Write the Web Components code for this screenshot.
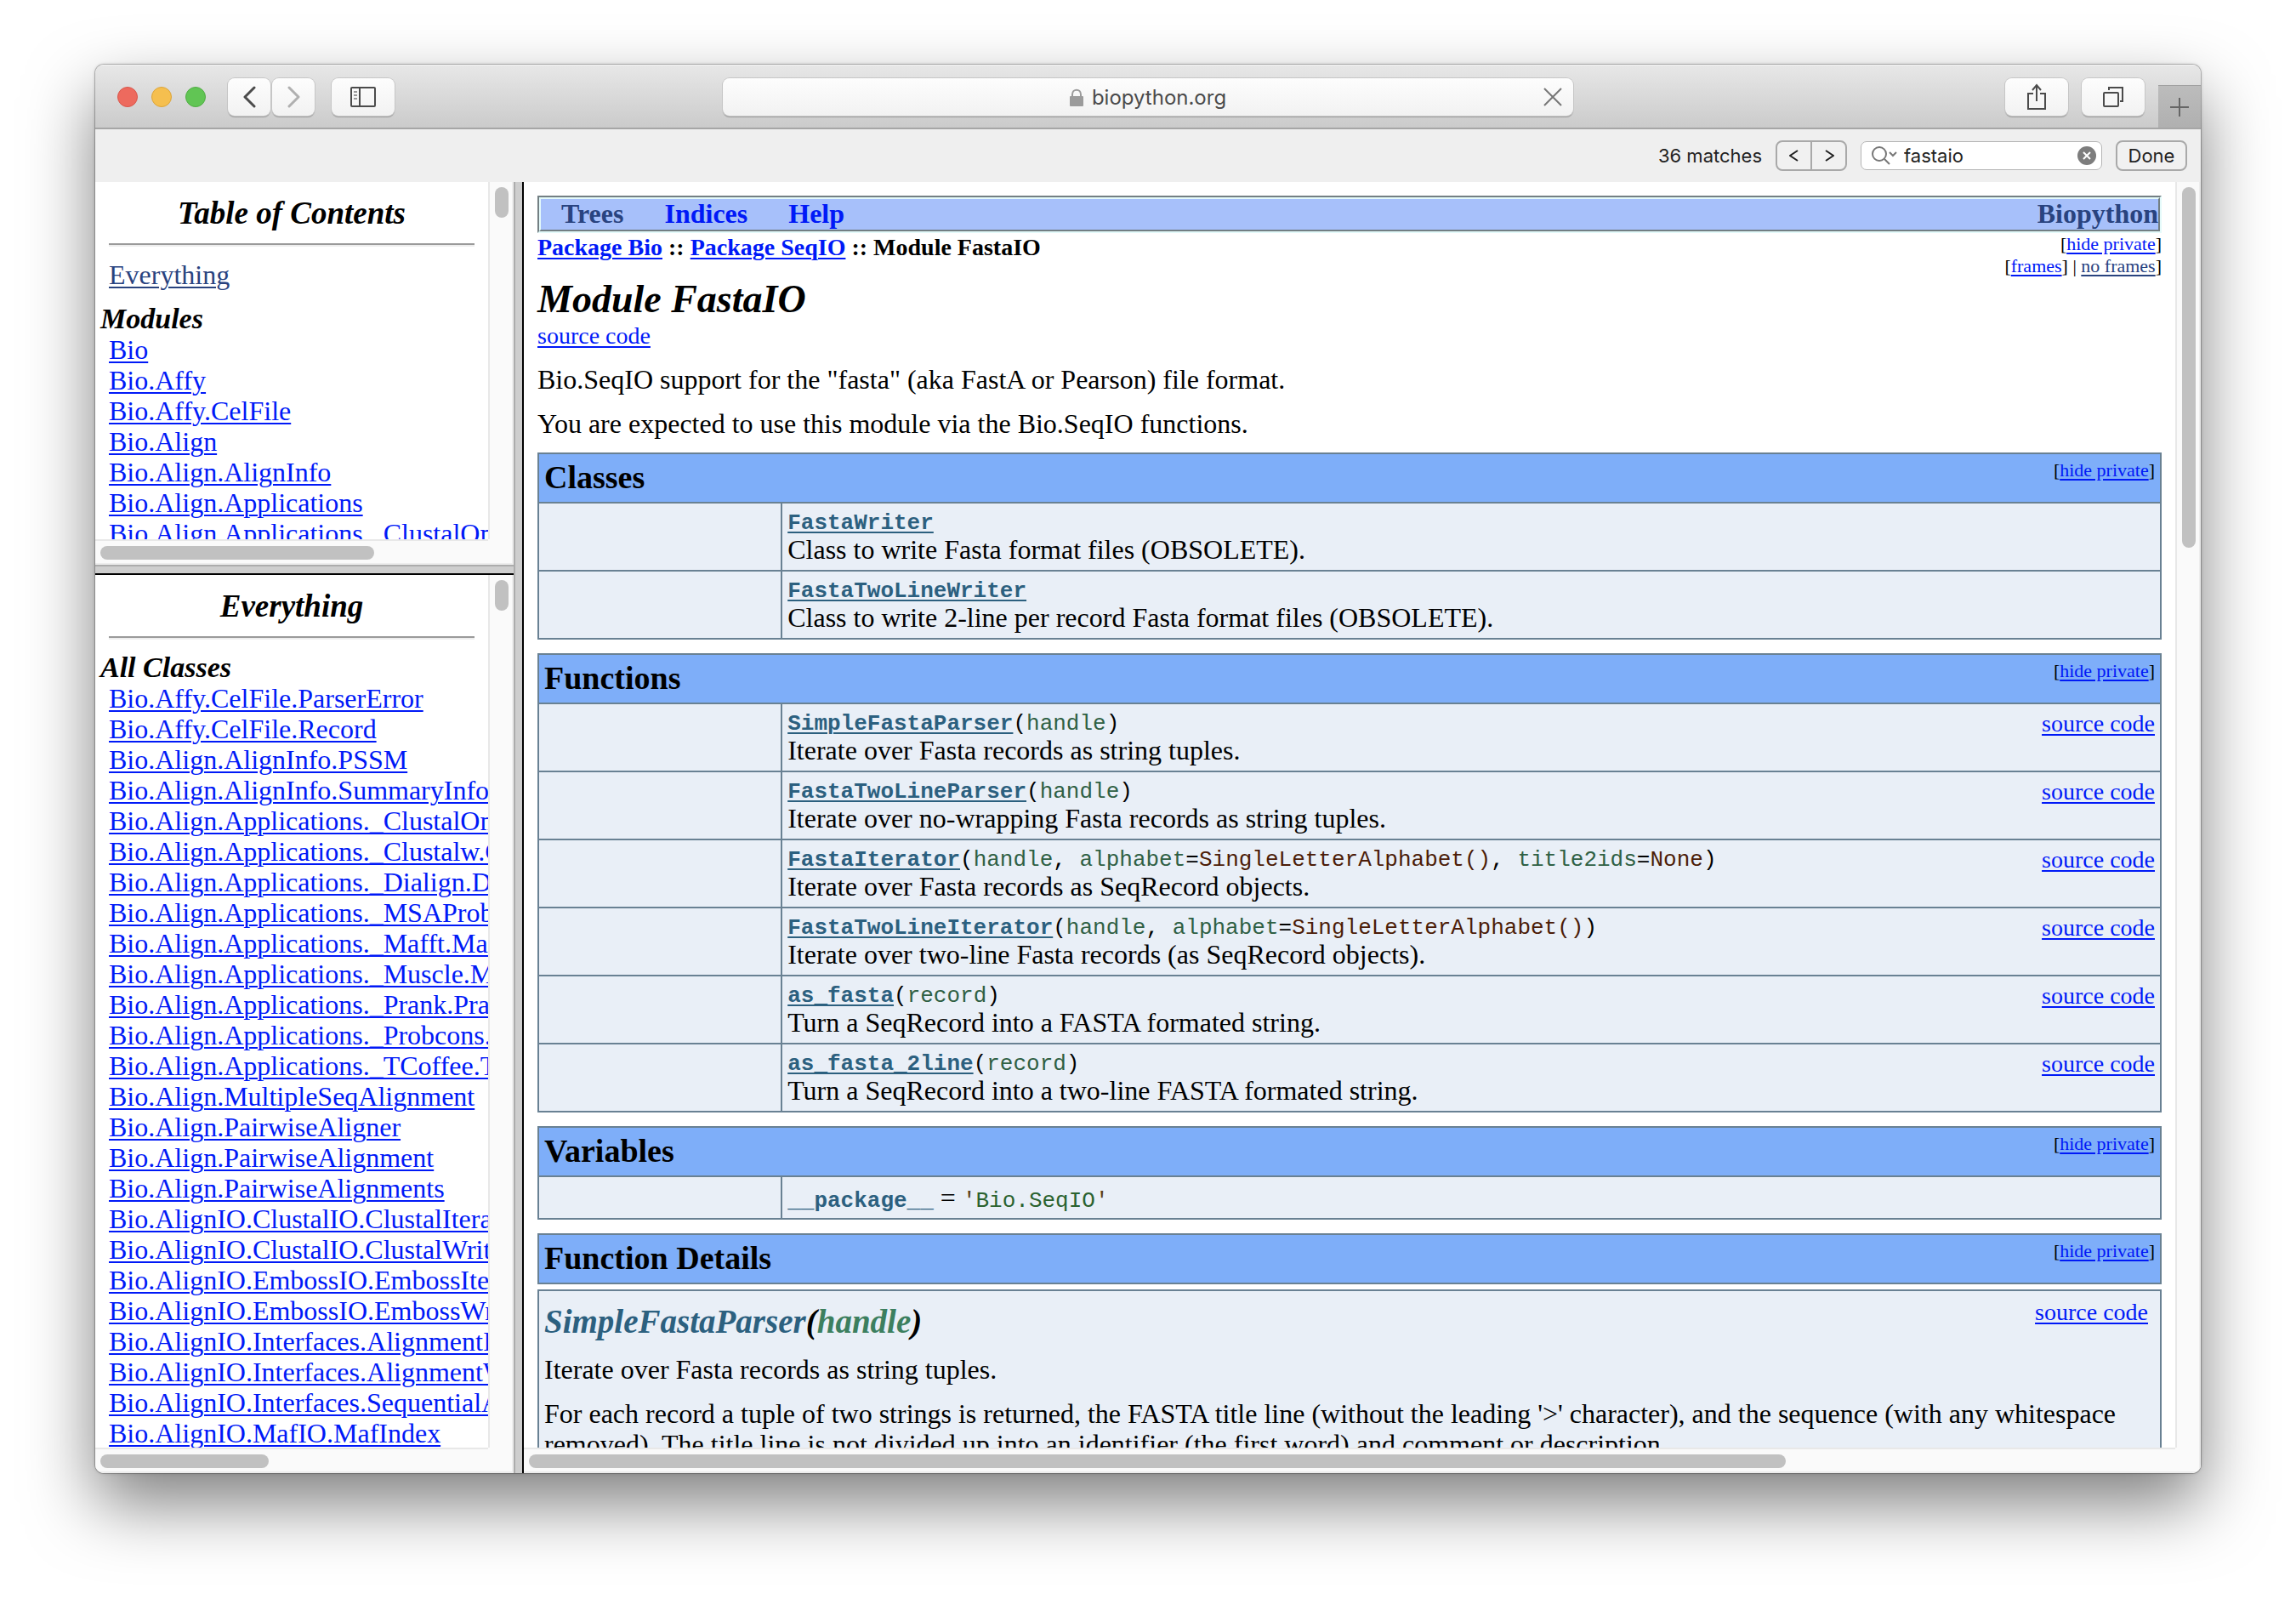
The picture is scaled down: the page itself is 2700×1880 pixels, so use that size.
<!DOCTYPE html>
<html lang="en">
<head>
<meta charset="utf-8">
<title>Bio.SeqIO.FastaIO</title>
<style>
  html, body { margin: 0; height: 100%; background: #fff; }
  body {
    box-sizing: border-box;
    padding: 76px 112px 148px;
    font-family: "Liberation Serif", "Times New Roman", serif;
    font-size: 32px;
    line-height: 36px;
    color: #000;
    --link: #0019f7;
    --seen: #29437f;
  }
</style>
</head>
<body>
<browser-window>
  <tool-bar slot="bar" address="biopython.org"></tool-bar>
  <find-bar slot="bar" query="fastaio" matches="36 matches"></find-bar>
  <frame-set slot="page">
    <doc-frame slot="top" class="side" style="--vthumb:36px;--hthumb:322px">
      <side-list heading="Table of Contents" group="Modules" top-link="Everything" list="modules"></side-list>
    </doc-frame>
    <doc-frame slot="bottom" class="side" style="--vthumb:36px;--hthumb:198px">
      <side-list heading="Everything" group="All Classes" list="classes"></side-list>
    </doc-frame>
    <doc-frame slot="main" style="--vthumb:424px;--hthumb:1478px">
      <module-page></module-page>
    </doc-frame>
  </frame-set>
</browser-window>

<script>
const LINKS = `a { color: var(--link); text-decoration-thickness: 2px; text-underline-offset: 3px; } a.seen { color: var(--seen); }`;

function define(name, render) {
  customElements.define(name, class extends HTMLElement {
    connectedCallback() {
      if (this.shadowRoot) return;
      this.attachShadow({ mode: 'open' }).innerHTML = render(this);
    }
  });
}

const LISTS = {
  modules: ['Bio', 'Bio.Affy', 'Bio.Affy.CelFile', 'Bio.Align', 'Bio.Align.AlignInfo',
    'Bio.Align.Applications', 'Bio.Align.Applications._ClustalOmega'],
  classes: ['Bio.Affy.CelFile.ParserError', 'Bio.Affy.CelFile.Record', 'Bio.Align.AlignInfo.PSSM',
    'Bio.Align.AlignInfo.SummaryInfo', 'Bio.Align.Applications._ClustalOmega.ClustalOmegaCommandline',
    'Bio.Align.Applications._Clustalw.ClustalwCommandline', 'Bio.Align.Applications._Dialign.DialignCommandline',
    'Bio.Align.Applications._MSAProbs.MSAProbsCommandline', 'Bio.Align.Applications._Mafft.MafftCommandline',
    'Bio.Align.Applications._Muscle.MuscleCommandline', 'Bio.Align.Applications._Prank.PrankCommandline',
    'Bio.Align.Applications._Probcons.ProbconsCommandline', 'Bio.Align.Applications._TCoffee.TCoffeeCommandline',
    'Bio.Align.MultipleSeqAlignment', 'Bio.Align.PairwiseAligner', 'Bio.Align.PairwiseAlignment',
    'Bio.Align.PairwiseAlignments', 'Bio.AlignIO.ClustalIO.ClustalIterator', 'Bio.AlignIO.ClustalIO.ClustalWriter',
    'Bio.AlignIO.EmbossIO.EmbossIterator', 'Bio.AlignIO.EmbossIO.EmbossWriter',
    'Bio.AlignIO.Interfaces.AlignmentIterator', 'Bio.AlignIO.Interfaces.AlignmentWriter',
    'Bio.AlignIO.Interfaces.SequentialAlignmentWriter', 'Bio.AlignIO.MafIO.MafIndex']
};

define('browser-window', () => `
  <style>
    :host { display: flex; flex-direction: column; height: 100%; border-radius: 10px; overflow: hidden; background: #fff;
      box-shadow: 0 0 0 1px rgba(0,0,0,.22), 0 0 4px rgba(0,0,0,.2), 0 36px 80px rgba(0,0,0,.5); }
    main { flex: 1; min-height: 0; display: flex; }
  </style>
  <slot name="bar"></slot><main><slot name="page"></slot></main>`);

define('tool-bar', host => `
  <style>
    :host { display: flex; align-items: center; box-sizing: border-box; height: 76px;
      background: linear-gradient(#e7e7e7, #cbcbcb); border-top: 1px solid #f4f4f4; border-bottom: 2px solid #a6a6a6;
      font: 24px/32px Inter, sans-serif; color: #4b4b4b; }
    .left, .right { flex: 1 1 0; display: flex; align-items: center; box-sizing: border-box; }
    .lights { display: flex; gap: 16px; margin: 0 26px; }
    .right { justify-content: flex-end; gap: 16px; align-self: stretch; }
    .light { width: 24px; height: 24px; padding: 0; border-radius: 50%; border: 1px solid; }
    .tool { box-sizing: border-box; width: 74px; height: 44px; padding: 0; border: 0; border-radius: 8px; color: #4b4b4b;
      background: linear-gradient(#fdfdfd, #f2f2f2); box-shadow: 0 0 0 1px #c6c6c6, 0 2px 1px #9d9d9d;
      display: flex; align-items: center; justify-content: center; }
    .nav { width: 50px; margin-right: 2px; }
    .side { margin-left: 18px; }
    .off { color: #b0b0b0; }
    .address { flex: 0 1 1000px; height: 44px; border-radius: 8px; box-sizing: border-box;
      background: linear-gradient(#fdfdfd, #f2f2f2); box-shadow: 0 0 0 1px #c6c6c6, 0 2px 1px #9d9d9d;
      display: grid; grid-template-columns: 1fr auto 1fr; align-items: center; }
    .address label { grid-column: 2; display: flex; align-items: center; gap: 10px; padding-top: 2px; }
    input { field-sizing: content; font: inherit; color: inherit; border: 0; padding: 0; background: none; outline: 0; }
    .stop { justify-self: end; border: 0; background: none; padding: 0 12px 0 0; color: #767676; display: flex; }
    .add { align-self: flex-end; width: 50px; height: 50px; padding: 0; border: 0; border-top: 1px solid #a0a0a0; background: linear-gradient(#bcbcbc, #b0b0b0); color: #666; display: flex; align-items: center; justify-content: center; }
    svg { display: block; fill: none; stroke: currentColor; stroke-width: 2; }
    .chevron { stroke-width: 3; stroke-linecap: round; stroke-linejoin: round; }
  </style>
  <div class="left">
    <div class="lights">
      <button class="light" aria-label="Close" style="background:#ed6a5e;border-color:#d9564b"></button>
      <button class="light" aria-label="Minimise" style="background:#f5bf4f;border-color:#dca53a"></button>
      <button class="light" aria-label="Zoom" style="background:#61c554;border-color:#50ad43"></button>
    </div>
    <button class="tool nav" aria-label="Back"><svg class="chevron" width="16" height="26"><path d="M14 2 3 13l11 11"/></svg></button>
    <button class="tool nav off" aria-label="Forward"><svg class="chevron" width="16" height="26"><path d="M3 2l11 11L3 24"/></svg></button>
    <button class="tool side" aria-label="Show sidebar"><svg width="30" height="24"><rect x="1" y="1" width="28" height="22" rx="1"/><path d="M11 1v22"/><path d="M4 6h4M4 10h4M4 14h4" stroke="#999"/></svg></button>
  </div>
  <div class="address">
    <label><svg width="16" height="22"><rect x="0" y="9" width="16" height="12" rx="1" fill="#9b9b9b" stroke="none"/><path d="M3 10V7c0-7 10-7 10 0v3" stroke="#9b9b9b"/></svg><input aria-label="Address" value="${host.getAttribute('address')}"></label>
    <button class="stop" aria-label="Stop loading"><svg width="24" height="24"><path d="M2 2l20 20M22 2 2 22"/></svg></button>
  </div>
  <div class="right">
    <button class="tool" aria-label="Share"><svg width="24" height="32"><path d="M8 12H2v18h20V12h-6M12 21V3M7 8l5-6 5 6"/></svg></button>
    <button class="tool" aria-label="Show tabs"><svg width="26" height="26"><rect x="2" y="8" width="17" height="16" rx="1"/><path d="M8 5V2h16v16h-3"/></svg></button>
    <button class="add" aria-label="New tab"><svg width="22" height="22"><path d="M11 0v22M0 11h22"/></svg></button>
  </div>`);

define('find-bar', host => `
  <style>
    :host { display: flex; align-items: center; justify-content: flex-end; box-sizing: border-box; height: 62px;
      padding: 0 16px 0 0; gap: 16px; background: #efefef; font: 22px/28px Inter, sans-serif; color: #222; }
    button { font: inherit; color: inherit; background: #f1f1f1; border: 2px solid #a9a9a9; box-sizing: border-box; padding: 0; height: 36px;
      display: flex; align-items: center; justify-content: center; }
    .step { display: flex; }
    .step button { width: 43px; border-radius: 8px 0 0 8px; }
    .step button + button { border-radius: 0 8px 8px 0; margin-left: -2px; }
    .field { box-sizing: border-box; width: 284px; height: 34px; display: flex; align-items: center; border: 1px solid #b5b5b5;
      border-radius: 7px; background: #fff; padding: 0 6px 0 12px; }
    input { flex: 1; min-width: 0; font: inherit; color: inherit; border: 0; padding: 0 0 0 7px; background: none; outline: 0; }
    .field button { border: 0; background: none; height: 22px; }
    .done { width: 84px; border-radius: 8px; }
    svg { display: block; fill: none; stroke: currentColor; stroke-width: 2; }
  </style>
  <span>${host.getAttribute('matches')}</span>
  <div class="step">
    <button aria-label="Previous match"><svg width="12" height="16"><path d="M10 2 1 8l9 6"/></svg></button>
    <button aria-label="Next match"><svg width="12" height="16"><path d="M2 2l9 6-9 6"/></svg></button>
  </div>
  <label class="field"><svg width="31" height="22" style="color:#777"><circle cx="9" cy="9" r="8"/><path d="M15 15l6 6M21 7l4 4 4-4"/></svg>
    <input aria-label="Find in page" value="${host.getAttribute('query')}">
    <button aria-label="Clear"><svg width="22" height="22"><circle cx="11" cy="11" r="11" fill="#7d7d7d" stroke="none"/><path d="M7 7l8 8M15 7l-8 8" stroke="#fff"/></svg></button>
  </label>
  <button class="done">Done</button>`);

define('frame-set', () => `
  <style>
    :host { flex: 1; min-width: 0; display: flex; }
    .column { flex: 0 0 492px; min-width: 0; display: flex; flex-direction: column; }
    ::slotted([slot=top]) { flex: 0 0 450px; min-height: 0; }
    ::slotted([slot=bottom]), ::slotted([slot=main]) { flex: 1; min-height: 0; min-width: 0; }
    .split { flex: 0 0 8px; background: #cecece; border: 0 solid #acacac; }
    .row { border-top-width: 2px; border-bottom: 2px solid #000; }
    .col { border-left-width: 2px; border-right: 2px solid #000; }
  </style>
  <div class="column"><slot name="top"></slot><div class="split row"></div><slot name="bottom"></slot></div>
  <div class="split col"></div><slot name="main"></slot>`);

define('doc-frame', () => `
  <style>
    :host { display: grid; grid-template: minmax(0, 1fr) 30px / minmax(0, 1fr) 30px; background: #fafafa; }
    .view { overflow: hidden; min-height: 0; background: #fff; padding: 16px 16px 0; }
    .v, .h { box-sizing: border-box; display: flex; }
    .v { border-left: 2px solid #e8e8e8; border-right: 2px solid #ededed; padding: 6px 4px 0 6px; grid-row: 1; grid-column: 2; }
    .h { border-top: 2px solid #e8e8e8; border-bottom: 2px solid #ededed; padding: 6px 0 4px 6px; grid-row: 2; grid-column: 1; }
    .corner { border: 0 solid #ededed; border-width: 0 2px 2px 0; }
    i { display: block; border-radius: 8px; background: #c1c1c1; }
    .v i { width: 16px; height: var(--vthumb); }
    .h i { width: var(--hthumb); height: 16px; }
  </style>
  <div class="view"><slot></slot></div><div class="v"><i></i></div><div class="h"><i></i></div><div class="corner"></div>`);

define('side-list', host => `
  <style>
    ${LINKS}
    :host { display: block; white-space: nowrap; }
    h1 { margin: 0; font: italic bold 37px/42px "Liberation Serif", serif; text-align: center; }
    hr { margin: 14px 0 0; border: 0; height: 2px; background: #9a9a9a; border-bottom: 2px solid #eee; }
    p { margin: 15px 0 0; }
    h2 { margin: 16px 0 0 -10px; font: italic bold 34px/36px "Liberation Serif", serif; }
    hr + h2 { margin-top: 15px; }
    ul { list-style: none; margin: 0; padding: 0; }
  </style>
  <h1>${host.getAttribute('heading')}</h1><hr>
  ${host.hasAttribute('top-link') ? `<p><a class="seen" href="#">${host.getAttribute('top-link')}</a></p>` : ''}
  <h2>${host.getAttribute('group')}</h2>
  <ul>${LISTS[host.getAttribute('list')].map(t => `<li><a href="#">${t}</a></li>`).join('')}</ul>`);

const TABLES = {
  classes: {
    heading: 'Classes',
    rows: [
      { name: 'FastaWriter', text: 'Class to write Fasta format files (OBSOLETE).' },
      { name: 'FastaTwoLineWriter', text: 'Class to write 2-line per record Fasta format files (OBSOLETE).' }
    ]
  },
  functions: {
    heading: 'Functions',
    rows: [
      { name: 'SimpleFastaParser', args: [['handle']], text: 'Iterate over Fasta records as string tuples.' },
      { name: 'FastaTwoLineParser', args: [['handle']], text: 'Iterate over no-wrapping Fasta records as string tuples.' },
      { name: 'FastaIterator', args: [['handle'], ['alphabet', 'SingleLetterAlphabet()'], ['title2ids', 'None']], text: 'Iterate over Fasta records as SeqRecord objects.' },
      { name: 'FastaTwoLineIterator', args: [['handle'], ['alphabet', 'SingleLetterAlphabet()']], text: 'Iterate over two-line Fasta records (as SeqRecord objects).' },
      { name: 'as_fasta', args: [['record']], text: 'Turn a SeqRecord into a FASTA formated string.' },
      { name: 'as_fasta_2line', args: [['record']], text: 'Turn a SeqRecord into a two-line FASTA formated string.' }
    ]
  },
  variables: { heading: 'Variables', rows: [{ name: '__package__', value: 'Bio.SeqIO' }] },
  details: { heading: 'Function Details', rows: [] }
};

const arg = ([n, d]) => `<span class="arg">${n}</span>${d ? `=<span class="def">${d}</span>` : ''}`;
const row = r => `<tr><td class="type"></td><td>${r.value
  ? `<code class="name">${r.name}</code> = <code><span class="quote">'</span><span class="str">${r.value}</span><span class="quote">'</span></code>`
  : `<div class="cell"><div><div class="sig"><a class="name" href="#">${r.name}</a>${r.args ? `(${r.args.map(arg).join(', ')})` : ''}</div><div class="text">${r.text}</div></div>${r.args ? '<a class="src" href="#">source code</a>' : ''}</div>`
}</td></tr>`;

define('api-table', host => {
  const t = TABLES[host.getAttribute('data')];
  return `
  <style>
    ${LINKS}
    :host { display: block; margin-top: 16px; }
    table { width: 100%; border-collapse: collapse; table-layout: fixed; background: #e9eff7; }
    col.type { width: 15%; }
    th, td { border: 2px solid #698193; padding: 6px; text-align: left; font-weight: normal; }
    th { background: #7eaef9; }
    .head, .cell { display: flex; justify-content: space-between; align-items: flex-start; }
    .head { min-height: 44px; }
    .cell { min-height: 66px; }
    .head b { font-size: 38px; line-height: 42px; }
    .head span { font-size: 22px; line-height: 26px; }
    .sig, code { font-family: "Liberation Mono", monospace; font-size: 26px; }
    .sig { line-height: 30px; padding-top: 2px; }
    code { line-height: 26px; }
    .text { line-height: 32px; }
    .name { font-weight: bold; color: #2c607f; }
    .arg { color: #2f6044; } .def { color: #4c1c07; } .quote { color: #5d4116; } .str { color: #2a622f; }
    .src { font-size: 28px; line-height: 34px; }
  </style>
  <table><colgroup><col class="type"><col></colgroup>
    <thead><tr><th colspan="2"><div class="head"><b>${t.heading}</b><span>[<a href="#">hide private</a>]</span></div></th></tr></thead>
    <tbody>${t.rows.map(row).join('')}</tbody>
  </table>`;
});

define('nav-bar', () => `
  <style>
    ${LINKS}
    :host { display: block; border: 2px solid; border-color: #737f83 #e4fafa #e4fafa #737f83; }
    nav { display: flex; gap: 48px; padding: 0 0 2px 24px; line-height: 34px; border: 2px solid; border-color: #e4fafa #737f83 #737f83 #e4fafa; background: #a7c0fa; font-weight: bold; }
    a { text-decoration: none; }
    a:last-child { margin-left: auto; }
  </style>
  <nav><a class="seen" href="#">Trees</a><a href="#">Indices</a><a href="#">Help</a><a class="seen" href="#">Biopython</a></nav>`);

define('detail-box', () => `
  <style>
    ${LINKS}
    :host { display: block; margin-top: 6px; padding: 6px 6px 12px; border: 2px solid #698193; background: #e9eff7; }
    header { display: flex; justify-content: space-between; align-items: flex-start; }
    h3 { margin: 8px 0 0; font: italic bold 39px/44px "Liberation Serif", serif; }
    .name { color: #2c607f; } .arg { color: #3c7f5f; }
    header a { font-size: 28px; line-height: 34px; margin: 2px 8px 0 0; }
    p { margin: 16px 0 0; }
  </style>
  <header><h3><span class="name">SimpleFastaParser</span>(<span class="arg">handle</span>)</h3><a href="#">source code</a></header>
  <p>Iterate over Fasta records as string tuples.</p>
  <p>For each record a tuple of two strings is returned, the FASTA title line (without the leading '&gt;' character), and the sequence (with any whitespace removed). The title line is not divided up into an identifier (the first word) and comment or description.</p>`);

define('module-page', () => `
  <style>
    ${LINKS}
    :host { display: block; }
    .crumbs { display: flex; justify-content: space-between; align-items: flex-start; }
    .crumbs b { font-size: 28px; line-height: 34px; }
    .options { text-align: right; font-size: 22px; line-height: 26px; }
    h1 { margin: 0; font: italic bold 46px/52px "Liberation Serif", serif; }
    .src { display: block; font-size: 28px; line-height: 34px; }
    p { margin: 16px 0 0; }
  </style>
  <nav-bar></nav-bar>
  <div class="crumbs">
    <b><a href="#">Package Bio</a> :: <a href="#">Package SeqIO</a> :: Module FastaIO</b>
    <div class="options">[<a href="#">hide private</a>]<br>[<a href="#">frames</a>] | <a class="seen" href="#">no frames</a>]</div>
  </div>
  <h1>Module FastaIO</h1>
  <div class="src"><a href="#">source code</a></div>
  <p>Bio.SeqIO support for the "fasta" (aka FastA or Pearson) file format.</p>
  <p>You are expected to use this module via the Bio.SeqIO functions.</p>
  <api-table data="classes"></api-table>
  <api-table data="functions"></api-table>
  <api-table data="variables"></api-table>
  <api-table data="details"></api-table>
  <detail-box></detail-box>`);
</script>
</body>
</html>
